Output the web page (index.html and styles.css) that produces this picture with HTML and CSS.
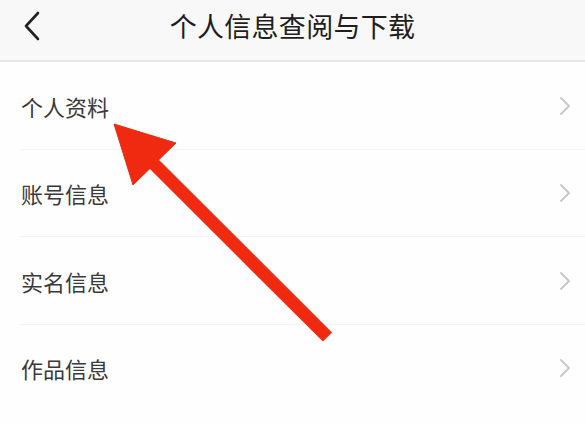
FILE: index.html
```html
<!DOCTYPE html>
<html lang="zh">
<head>
<meta charset="utf-8">
<link rel="stylesheet" href="styles.css">
</head>
<body>
<div class="page">
  <header class="nav">
    <span class="back">
      <svg width="18" height="30" viewBox="0 0 18 30"><polyline points="15,2 3,15 15,28" fill="none" stroke="#222" stroke-width="2.6" stroke-linecap="round" stroke-linejoin="round"/></svg>
    </span>
    <h1 class="title">个人信息查阅与下载</h1>
  </header>
  <ul class="list">
    <li class="row"><span class="label">个人资料</span><svg class="chev" width="12" height="20" viewBox="0 0 12 20"><polyline points="2,2 10,10 2,18" fill="none" stroke="#c6c6c6" stroke-width="1.8" stroke-linecap="round" stroke-linejoin="round"/></svg></li>
    <li class="row"><span class="label">账号信息</span><svg class="chev" width="12" height="20" viewBox="0 0 12 20"><polyline points="2,2 10,10 2,18" fill="none" stroke="#c6c6c6" stroke-width="1.8" stroke-linecap="round" stroke-linejoin="round"/></svg></li>
    <li class="row"><span class="label">实名信息</span><svg class="chev" width="12" height="20" viewBox="0 0 12 20"><polyline points="2,2 10,10 2,18" fill="none" stroke="#c6c6c6" stroke-width="1.8" stroke-linecap="round" stroke-linejoin="round"/></svg></li>
    <li class="row"><span class="label">作品信息</span><svg class="chev" width="12" height="20" viewBox="0 0 12 20"><polyline points="2,2 10,10 2,18" fill="none" stroke="#c6c6c6" stroke-width="1.8" stroke-linecap="round" stroke-linejoin="round"/></svg></li>
  </ul>
  <svg class="arrow" width="585" height="424" viewBox="0 0 585 424">
    <line x1="148" y1="158" x2="327.5" y2="337" stroke="#f02a10" stroke-width="13"/>
    <polygon points="114,124 176,143 133,185" fill="#f02a10" stroke="#f02a10" stroke-width="1" stroke-linejoin="round"/>
  </svg>
</div>
</body>
</html>
```
FILE: styles.css
```css
* { box-sizing: border-box; }
html, body { margin: 0; padding: 0; background: #fff; }
body {
  font-family: "Noto Sans CJK SC", "Noto Sans", sans-serif;
  width: 585px;
  height: 424px;
  overflow: hidden;
}
.page {
  position: relative;
  width: 585px;
  height: 424px;
  background: #fefefe;
}
.nav {
  position: relative;
  height: 62px;
  padding-bottom: 10px;
  background: #f8f8f8;
  border-bottom: 2px solid #e7e7e7;
  display: flex;
  align-items: center;
  justify-content: center;
}
.back {
  position: absolute;
  left: 23px;
  top: 11px;
  display: flex;
}
.title {
  margin: 0;
  font-size: 27px;
  font-weight: 400;
  color: #1e1e1e;
  letter-spacing: 0.3px;
  line-height: 1;
}
.list {
  list-style: none;
  margin: 0;
  padding: 0;
}
.row {
  height: 87.5px;
  display: flex;
  align-items: center;
  justify-content: space-between;
  padding: 0 14px 0 21px;
  position: relative;
}
.row::after {
  content: "";
  position: absolute;
  left: 20px;
  right: 0;
  bottom: 0;
  height: 1px;
  background: #f4f4f4;
}
.row:last-child::after { display: none; }
.label {
  font-size: 22px;
  color: #3a3a3a;
  line-height: 1;
}
.chev { display: block; }
.arrow {
  position: absolute;
  left: 0;
  top: 0;
  pointer-events: none;
}
```
